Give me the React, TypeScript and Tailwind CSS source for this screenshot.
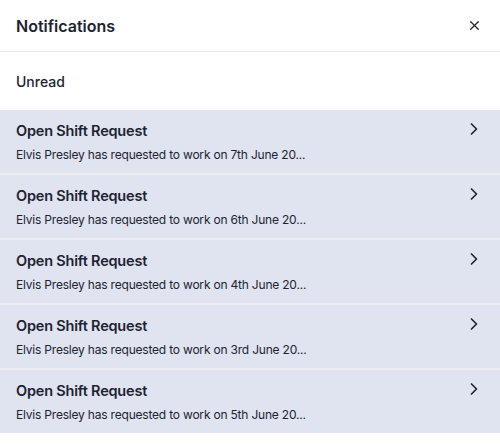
import { X, ChevronRight } from "lucide-react"

const items = [
  "Elvis Presley has requested to work on 7th June 20...",
  "Elvis Presley has requested to work on 6th June 20...",
  "Elvis Presley has requested to work on 4th June 20...",
  "Elvis Presley has requested to work on 3rd June 20...",
  "Elvis Presley has requested to work on 5th June 20...",
]

export default function App() {
  return (
    <div className="h-[446px] w-[500px] bg-white text-[#1d2330] font-['Inter','Noto_Sans',sans-serif]">
      {/* Header */}
      <div className="flex h-[52px] items-center justify-between border-b border-[#e8e9ec] pl-4 pr-[18px]">
        <h2 className="text-[16px] font-semibold">Notifications</h2>
        <X className="h-[15px] w-[15px]" strokeWidth={2} />
      </div>

      <div className="flex h-[58px] items-center px-4">
        <p className="text-[14px] font-medium">Unread</p>
      </div>

      <div className="flex flex-col gap-[2px] bg-[#eceef2]">
        {items.map((text, i) => (
          <div key={i} className="flex h-[63px] items-start justify-between bg-[#dfe4f0] pl-4 pr-[16px] pt-[11px]">
            <div className="min-w-0">
              <p className="text-[14.5px] font-semibold leading-5 tracking-[-0.2px]">Open Shift Request</p>
              <p className="mt-[6px] whitespace-nowrap text-[12px] leading-4 tracking-[-0.2px]">{text}</p>
            </div>
            <ChevronRight className="mt-[-2px] h-5 w-5" strokeWidth={2} />
          </div>
        ))}
      </div>
    </div>
  )
}
